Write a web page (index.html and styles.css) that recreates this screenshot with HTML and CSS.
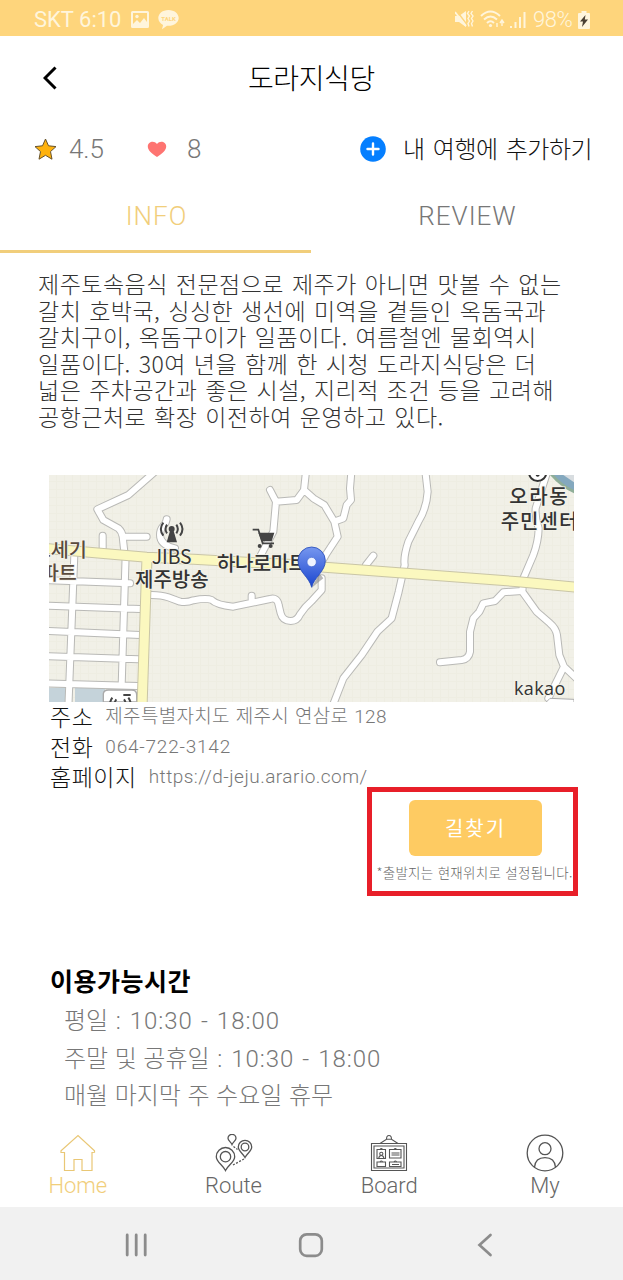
FILE: index.html
```html
<!DOCTYPE html>
<html lang="ko">
<head>
<meta charset="utf-8">
<title>도라지식당</title>
<link rel="stylesheet" href="styles.css">
</head>
<body>
<div class="status">
  <span class="clock">SKT 6:10</span>
  <svg class="ic-pic" width="18" height="18" viewBox="0 0 18 18"><path fill-rule="evenodd" fill="#fff5dc" d="M1.500 0h15a1.500 1.500 0 0 1 1.500 1.500v14a1.500 1.500 0 0 1-1.500 1.500h-15A1.500 1.500 0 0 1 0 15.500v-14A1.500 1.500 0 0 1 1.500 0zM2 2v11l4-4 3 3 4-5 3 4V2z"/><circle cx="6" cy="5.500" r="1.700" fill="#fff5dc"/></svg>
  <svg class="ic-talk" width="21" height="20" viewBox="0 0 21 20"><path fill="#fff5dc" d="M10.500 0C4.700 0 .3 3.600.3 8c0 3 2 5.500 4.800 6.900L4 19.300l5-3.500c7 .5 11.700-3.300 11.700-7.800 0-4.400-4.500-8-10.200-8z"/><text class="talk" x="10.500" y="10.700" text-anchor="middle">TALK</text></svg>
  <span class="grow"></span>
  <svg class="ic-mute" width="19" height="19" viewBox="0 0 19 19"><path fill="#fff5dc" d="M0 6h4l7-5v16l-7-5H0z"/><path d="M1 0l12 16" stroke="#fed57c" stroke-width="1.500"/><path d="M0 2l11 14" stroke="#fff5dc" stroke-width="1.800"/><path d="M14 1l-1.500 2.500L14.500 6 13 8.500l1.500 2.500-1.500 2.500 1 3M17.500 1L16 3.500 18 6l-1.500 2.500L18 11l-1.500 2.500 1 3" stroke="#fff5dc" fill="none" stroke-width="1.400"/></svg>
  <svg class="ic-wifi" width="25" height="19" viewBox="0 0 25 19"><path d="M1 6Q10.500-3 20 6M4 9.500q6.500-6 13 0M7 13q3.500-3.500 7 0" fill="none" stroke="#fff5dc" stroke-width="2"/><circle cx="10.500" cy="15.500" r="1.600" fill="#fff5dc"/><path d="M22 16v-5m-2 2l2-3 2 3M17 13v4" fill="none" stroke="#fff5dc" stroke-width="1.400"/></svg>
  <svg class="ic-sig" width="16" height="18" viewBox="0 0 16 18"><path d="M1 17v-2M5.500 17v-6M10 17V6M14.500 17V1" stroke="#fff5dc" stroke-width="2"/></svg>
  <span class="pct">98%</span>
  <svg class="ic-bat" width="12" height="18" viewBox="0 0 12 18"><path d="M1 2h2.500V0h5v2H11q1 0 1 1v14q0 1-1 1H1q-1 0-1-1V3q0-1 1-1z" fill="#fff5dc"/><path d="M7.500 4L2 10.500h3L4 16l6-7.500H6.800z" fill="#4b4033"/></svg>
</div>

<header class="top">
  <svg class="back" width="14" height="24" viewBox="0 0 14 24"><path d="M12.500 1.500L2 12l10.500 10.500" fill="none" stroke="#000" stroke-width="3"/></svg>
  <h1 class="title">도라지식당</h1>
</header>

<section class="meta">
  <svg class="star" width="23" height="22" viewBox="0 0 23 22"><path d="M11.500 1l3 6.800 7.500.8-5.500 5 1.500 7.600-6.500-3.900L5 21.200l1.500-7.600-5.500-5 7.500-.8z" fill="#ffb20d" stroke="#67532c" stroke-width="1" stroke-linejoin="round"/></svg>
  <span class="score">4.5</span>
  <svg class="heart" width="20" height="17" viewBox="0 0 20 17"><path d="M10 16C5 12.500.8 9.500.8 5.500.8 1 6.800-1 10 3c3.200-4 9.200-2 9.200 2.500 0 4-4.200 7-9.200 10.500z" fill="#fe7471"/></svg>
  <span class="likes">8</span>
  <span class="grow"></span>
  <svg class="plus" width="26" height="26" viewBox="0 0 26 26"><circle cx="13" cy="13" r="12.800" fill="#057fff"/><path d="M13 7.500v11M7.500 13h11" stroke="#fff" stroke-width="2.400" stroke-linecap="round"/></svg>
  <span class="add">내 여행에 추가하기</span>
</section>

<nav class="tabs">
  <span class="tab tab-on">INFO</span>
  <span class="tab">REVIEW</span>
</nav>

<main class="content">
  <p class="desc">제주토속음식 전문점으로 제주가 아니면 맛볼 수 없는<br>갈치 호박국, 싱싱한 생선에 미역을 곁들인 옥돔국과<br>갈치구이, 옥돔구이가 일품이다. 여름철엔 물회역시<br>일품이다. 30여 년을 함께 한 시청 도라지식당은 더<br>넓은 주차공간과 좋은 시설, 지리적 조건 등을 고려해<br>공항근처로 확장 이전하여 운영하고 있다.</p>

  <svg class="map" width="525" height="227" viewBox="27 30 1575 681">
    <defs>
      <linearGradient id="pin" x1="0" y1="0" x2="0" y2="1"><stop offset="0" stop-color="#7697ef"/><stop offset="1" stop-color="#1a45cf"/></linearGradient>
      <pattern id="grain" width="24" height="24" patternUnits="userSpaceOnUse"><path d="M0 0H24M0 0V24" stroke="#eeede2" stroke-width="6"/></pattern>
      <g id="roads" fill="none" stroke-linecap="round" stroke-linejoin="round">
        <path d="M345 20L265 90L172 133L190 165L235 190Q246 200 248 215L254 270M248 215H320M188 250V212"/>
        <path d="M257 270L245 660M103 270L85 730M10 345L270 355M10 422L300 432M10 497L300 510M10 573L295 583M10 655L292 663"/>
        <path d="M335 390Q365 390 385 397L420 410Q440 414 460 406Q500 398 515 405Q530 420 580 425L690 402Q712 396 716 420L722 445Q728 468 752 468Q772 468 780 448Q795 425 815 408L845 375V340M635 412V392"/>
        <path d="M380 163C378 185 360 180 360 210Q360 240 405 250"/>
        <path d="M690 75L708 110L700 200L660 275M708 110L770 105L792 75L799 10M792 75L820 100L853 120L883 170L893 215L860 265L840 300M883 170L910 160L920 120L933 105L930 70L935 10"/>
        <path d="M1155 10L1163 80Q1160 130 1135 170L1105 230Q1090 275 1094 300L1076 380L1055 460L1012 500L965 570L910 640L877 725M978 300L1000 272"/>
        <path d="M1525 10L1487 130Q1485 160 1496 190Q1495 230 1480 270L1450 340L1447 380L1490 440L1530 475Q1548 490 1551 510L1558 570L1572 605L1620 650M1572 605L1525 700"/>
        <path d="M1445 378L1390 382L1365 408L1330 415L1318 440L1300 460L1290 500V560Q1286 582 1265 585L1200 592"/>
      </g>
    </defs>
    <rect x="27" y="30" width="1575" height="681" fill="#f1f0e7"/>
    <rect x="27" y="30" width="1575" height="681" fill="url(#grain)"/>
    <path d="M27 668H75V711H27zM105 668H195V711H105z" fill="#c5d3da"/>
    <path d="M1530 30Q1560 65 1602 85V30z" fill="#8fae98"/><path d="M1542 30Q1565 58 1602 75V30z" fill="#84a8be"/><path d="M1570 30L1602 52V30z" fill="#d8dde0"/>
    <use href="#roads" stroke="#b9b9b6" stroke-width="24"/>
    <use href="#roads" stroke="#fff" stroke-width="18"/>
    <path d="M190 711V686Q192 675 205 675H275Q290 675 290 690V711z" fill="#fff" stroke="#aaa" stroke-width="4"/>
    <path d="M1515 715L1530 700L1602 703V715" fill="#fff" stroke="#aaa" stroke-width="3"/>
    <g fill="none"><path d="M10 250L320 277L460 283L800 301L855 307L1435 350L1620 368M321 275L306 730" stroke="#c9c5a6" stroke-width="33"/><path d="M10 250L320 277L460 283L800 301L855 307L1435 350L1620 368M321 275L306 730" stroke="#fbf8bf" stroke-width="27"/></g>
    <g fill="none" stroke="#444" stroke-width="6"><path d="M370 173Q355 192 370 212M381 179Q372 192 381 205M420 173Q435 192 420 212M409 179Q418 192 409 205"/><path d="M217 698Q204 715 217 730M265 698Q278 715 265 730M229 703Q220 715 229 725M252 703Q261 715 252 725M250 690H272" /></g>
    <circle cx="395" cy="192" r="9" fill="#444"/><path d="M390 198L380 232H411L401 198z" fill="#444"/>
    <path d="M638 194H655L668 235H702" fill="none" stroke="#444" stroke-width="5"/><path d="M655 203H703L695 229H665z" fill="#444"/><circle cx="659" cy="243" r="6" fill="#444"/><circle cx="692" cy="243" r="6" fill="#444"/>
    <circle cx="1493" cy="22" r="26" fill="#fff" stroke="#333" stroke-width="6"/><circle cx="1493" cy="29" r="6" fill="#333"/>
    <g class="map-label">
      <text class="brown" x="-22" y="277">느세기</text>
      <text class="brown" x="2" y="345">파트</text>
      <text class="latin" x="335" y="296" textLength="120" lengthAdjust="spacingAndGlyphs">JIBS</text>
      <text x="285" y="367" textLength="221">제주방송</text>
      <text x="531" y="318" textLength="270">하나로마트</text>
      <text x="1408" y="117" textLength="175">오라동</text>
      <text x="1382" y="191" textLength="230">주민센터</text>
      <text class="kakao" x="1422" y="689" textLength="154">kakao</text>
    </g>
    <path d="M815 368L850 340L838 325z" fill="#888" opacity=".6"/>
    <path d="M815 367C808 336 774 320 774 287A41 41 0 0 1 856 287C856 320 822 336 815 367z" fill="url(#pin)" stroke="#284db8" stroke-width="2.500"/>
    <circle cx="815" cy="291" r="14" fill="#eef3ff" stroke="#4166cf" stroke-width="2"/>
  </svg>

  <dl class="facts">
    <div class="fact"><dt>주소</dt><dd class="addr">제주특별자치도 제주시 연삼로 128</dd></div>
    <div class="fact"><dt>전화</dt><dd class="tel">064-722-3142</dd></div>
    <div class="fact"><dt>홈페이지</dt><dd class="url">https://d-jeju.arario.com/</dd></div>
  </dl>

  <div class="route-box">
    <button class="route-btn">길찾기</button>
    <span class="route-note">*출발지는 현재위치로 설정됩니다.</span>
  </div>

  <h2 class="hours-title">이용가능시간</h2>
  <div class="hours">
    <div>평일 <span class="time">: 10:30 - 18:00</span></div>
    <div>주말 및 공휴일 <span class="time">: 10:30 - 18:00</span></div>
    <div>매월 마지막 주 수요일 휴무</div>
  </div>
</main>

<nav class="bottom">
  <div class="item item-on">
    <svg width="38" height="38" viewBox="0 0 38 38" fill="none" stroke="#e9c775" stroke-width="1.200"><path d="M5.500 18.500v18h9.500V25.500h8v11h10v-18l2.500-.2v-1.500L19 1.500 2 16.800v1.700z"/></svg>
    <span>Home</span>
  </div>
  <div class="item">
    <svg width="38" height="38" viewBox="0 0 38 38" fill="none" stroke="#555" stroke-width="1.300"><path d="M10.500 36.500C8 31 1.300 28 1.300 22.700a9.200 9.200 0 0 1 18.400 0C19.700 28 13 31 10.500 36.500z"/><circle cx="10.500" cy="22.700" r="5.200"/><path d="M30 23.500C28 19.500 23.300 17 23.300 13a6.700 6.700 0 0 1 13.400 0c0 4-4.700 6.500-6.700 10.500z"/><circle cx="30" cy="13" r="3.800"/><path d="M17 10.500c-1-2.500-4-4-4-6.200a4 4 0 0 1 8 0c0 2.200-3 3.700-4 6.200z"/><path d="M18 31l11-6M18.500 12.500l4 3" stroke-dasharray="2 1.500"/></svg>
    <span>Route</span>
  </div>
  <div class="item">
    <svg width="38" height="38" viewBox="0 0 38 38" fill="none" stroke="#555" stroke-width="1.100"><path d="M1.500 9.500h35v27h-35zM4 12h30v22H4zM10 9.500l6.500-4.200h5L28 9.500M16.500 5.300Q16.500 1.500 19 1.500t2.500 3.800"/><path d="M7 15.500h8.500v9H7zM19.500 15.500H31v8.500H19.500zM7 28h8.500v4.500H7zM19.500 28H31v4.500H19.500zM21.500 19h8M21.500 21h8M22 30.500h7"/><circle cx="11.300" cy="19.800" r="1.600"/><path d="M8.700 24.500q.3-3 2.600-3t2.600 3M10 15.500q1.300-2 2.600 0M24 15.500q1.300-2 2.600 0M10 28q1.300-2 2.600 0M24 28q1.300-2 2.600 0"/></svg>
    <span>Board</span>
  </div>
  <div class="item">
    <svg width="38" height="38" viewBox="0 0 38 38" fill="none" stroke="#555" stroke-width="1.300"><circle cx="19" cy="19" r="17.800"/><circle cx="19" cy="14.700" r="6"/><path d="M8.500 33.300C9 27 13 23.700 19 23.700s10 3.300 10.500 9.600"/></svg>
    <span>My</span>
  </div>
</nav>

<footer class="sysbar">
  <svg width="24" height="24" viewBox="0 0 24 24"><path d="M3.200 2v20M12.200 2v20M21.200 2v20" stroke="#8c8c8c" stroke-width="2.800" stroke-linecap="round"/></svg>
  <svg width="26" height="26" viewBox="0 0 26 26"><rect x="2.200" y="2.300" width="21.600" height="21.500" rx="6.500" fill="none" stroke="#8c8c8c" stroke-width="2.700"/></svg>
  <svg width="24" height="24" viewBox="0 0 24 24"><path d="M17.500 2L6.500 12l11 10" fill="none" stroke="#8c8c8c" stroke-width="2.700" stroke-linecap="round"/></svg>
</footer>
</body>
</html>
```
FILE: styles.css
```css
* { box-sizing: border-box; margin: 0; padding: 0; }
body {
  width: 623px;
  height: 1280px;
  display: flex;
  flex-direction: column;
  background: #fff;
  overflow: hidden;
  font-family: Roboto, "Noto Sans CJK KR", sans-serif;
  font-weight: 300;
  white-space: nowrap;
}
svg { display: block; flex: none; }
.grow { flex: 1; }

.status {
  height: 36px;
  display: flex;
  align-items: center;
  padding: 3px 33px 0 34px;
  background: #fed57c;
  color: #fff5dc;
  font-size: 22px;
  line-height: 32px;
}
.clock { width: 97px; letter-spacing: 0; font-weight: 400; }
.ic-talk { margin-left: 9px; }
.talk { font: 700 6px Roboto, sans-serif; fill: #fed57c; }
.ic-wifi { margin-left: 6px; }
.ic-sig { margin-left: 5px; }
.pct { width: 44px; margin-left: 7px; letter-spacing: -0.4px; }
.ic-bat { margin-left: 1px; }

.top { height: 82px; display: flex; align-items: center; padding: 1px 0 0 43px; }
.title {
  width: 127px;
  margin: -2px 0 0 191px;
  font: 300 28px/40px "Noto Sans CJK KR", sans-serif;
  letter-spacing: -0.4px;
}

.meta { height: 62px; display: flex; align-items: center; padding: 0 31px 0 34px; color: #777; }
.score { width: 36px; margin-left: 12px; font-size: 26px; letter-spacing: -0.1px; }
.heart { margin-left: 42px; }
.likes { margin-left: 20px; font-size: 26px; }
.add {
  width: 189px;
  margin: -2px 0 0 17px;
  color: #111;
  font: 300 24px/36px "Noto Sans CJK KR", sans-serif;
  letter-spacing: -0.5px;
  word-spacing: 2px;
}

.tabs { height: 73px; display: flex; }
.tab {
  width: 311px;
  padding: 18px 0 0 2px;
  text-align: center;
  color: #777;
  font-size: 26px;
  line-height: 36px;
  letter-spacing: 1px;
}
.tab-on { color: #f1ce7b; border-bottom: 3px solid #f1ce7b; }

.content { height: 872px; padding: 17px 0 0 49px; }
.desc {
  margin-left: -11px;
  height: 160px;
  color: #333;
  font: 300 23px/26.6px "Noto Sans CJK KR", sans-serif;
  letter-spacing: 0.48px;
  word-spacing: 1px;
}
.map { margin-top: 45px; }
.map-label { font-family: "Noto Sans CJK KR", sans-serif; font-size: 60px; font-weight: 500; fill: #333; stroke: #f4f3ea; stroke-width: 5px; paint-order: stroke; }
.map-label .brown { fill: #5a4b3d; font-size: 59px; }
.map-label .latin { font-size: 60px; font-weight: 400; }
.map-label .kakao { font-family: "Open Sans", sans-serif; font-size: 54px; font-weight: 400; }

.fact { display: flex; align-items: center; height: 30px; color: #777; }
.fact dt {
  margin: -3px 12px 0 1px;
  color: #111;
  font: 300 23px/30px "Noto Sans CJK KR", sans-serif;
  letter-spacing: 0.5px;
}
.addr { font: 300 19px/30px Roboto, "Noto Sans CJK KR", sans-serif; letter-spacing: 0.3px; word-spacing: 1px; }
.tel, .url { font-size: 19px; line-height: 30px; letter-spacing: 0.78px; }
.url { letter-spacing: 0.48px; }

.route-box {
  width: 211px;
  height: 109px;
  margin: -5px 0 0 318px;
  display: flex;
  flex-direction: column;
  align-items: center;
  padding-top: 8px;
  border: 5px solid #e81f29;
}
.route-btn {
  width: 133px;
  height: 56px;
  margin-left: 6px;
  border: 0;
  border-radius: 6px;
  background: #fecb62;
  color: #fff;
  font: 400 20px/54px "Noto Sans CJK KR", sans-serif;
  letter-spacing: 2px;
}
.route-note {
  margin: 4px 0 0 4px;
  color: #666;
  font: 300 13.5px/24px "Noto Sans CJK KR", sans-serif;
  letter-spacing: 0.3px;
}

.hours-title {
  margin: 65px 0 1px 1px;
  font: 700 25px/38px "Noto Sans CJK KR", sans-serif;
  letter-spacing: 0.5px;
}
.hours {
  padding: 3px 0 0 15px;
  color: #777;
  font: 300 24px/37.5px Roboto, "Noto Sans CJK KR", sans-serif;
  word-spacing: 0.7px;
}
.time { margin-left: 1px; letter-spacing: 0.95px; word-spacing: 1.3px; }

.bottom { height: 82px; display: grid; grid-template-columns: repeat(4, 155.7px); }
.item { display: flex; flex-direction: column; align-items: center; padding-top: 9px; color: #666; font-size: 22px; line-height: 27px; letter-spacing: 0; }
.item-on { color: #f1ce7b; }

.sysbar { height: 73px; display: flex; justify-content: space-between; align-items: center; padding: 3px 126px 0 124px; background: #f1f1f1; }
```
